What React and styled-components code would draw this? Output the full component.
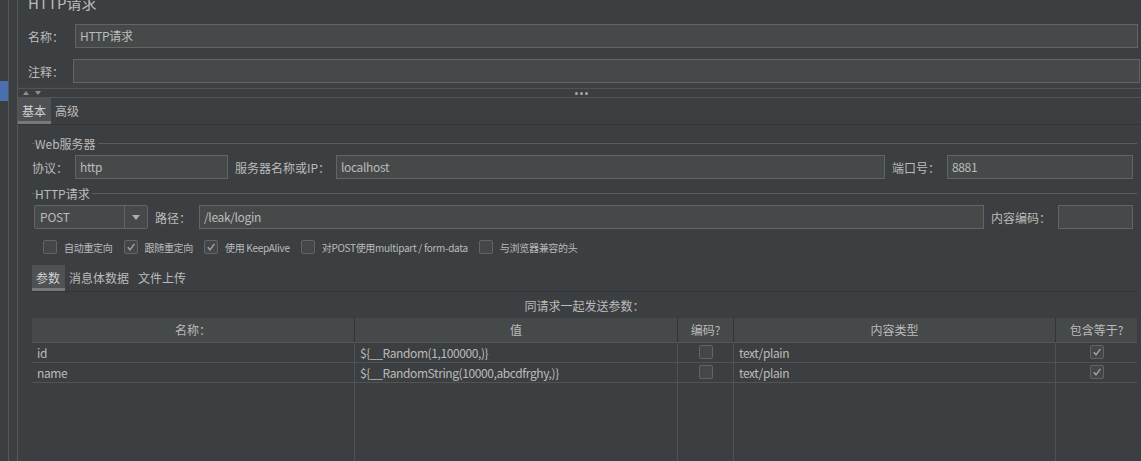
import React from "react";
import styled, { createGlobalStyle } from "styled-components";

const GlobalStyle = createGlobalStyle`
  html, body {
    margin: 0;
    padding: 0;
    background: #3c3f41;
  }
  body {
    font-family: "Noto Sans CJK SC", "Noto Sans", sans-serif;
    font-size: 12px;
    color: #bbbbbb;
  }
`;

const Root = styled.div`
  display: flex;
  height: 461px;
  overflow: hidden;
  background: #3c3f41;
`;

const Rail = styled.div`
  display: flex;
  flex: none;
`;

const RailCol = styled.div`
  width: 8px;
  border-right: 1px solid #555759;
`;

const Marker = styled.div`
  margin-top: 81px;
  height: 20px;
  background: #4b6eaf;
`;

const Main = styled.div`
  flex: 1;
  display: flex;
  flex-direction: column;
  min-width: 0;
`;

const Title = styled.div`
  margin-top: -7px;
  height: 20px;
  line-height: 20px;
  padding-left: 10px;
  font-size: 15px;
`;

const FormRow = styled.div`
  display: flex;
  align-items: center;
  margin-top: ${(p) => p.$top || 0}px;
  padding: 0 ${(p) => p.$right || 3}px 0 ${(p) => p.$left || 10}px;
`;

const Label = styled.div`
  flex: none;
  width: ${(p) => p.$w}px;
  margin-left: ${(p) => p.$ml || 0}px;
  white-space: nowrap;
`;

const Field = styled.div`
  box-sizing: border-box;
  height: 24px;
  line-height: 22px;
  padding: 0 4px;
  background: #45494a;
  border: 1px solid #646464;
  white-space: nowrap;
  overflow: hidden;
  letter-spacing: -0.35px;
  ${(p) => (p.$w ? `flex: none; width: ${p.$w}px;` : "flex: 1;")}
`;

const Band = styled.div`
  height: 5px;
  background: #3e4143;
`;

const Splitter = styled.div`
  box-sizing: border-box;
  height: 10px;
  border-top: 1px solid #515456;
  border-bottom: 1px solid #515456;
  display: grid;
  grid-template-columns: 1fr auto 1fr;
  align-items: center;
`;

const Arrows = styled.div`
  display: flex;
  gap: 6px;
  padding-left: 5px;
`;

const Tri = styled.div`
  width: 0;
  height: 0;
  border-left: 3px solid transparent;
  border-right: 3px solid transparent;
  ${(p) =>
    p.$down
      ? "border-top: 4px solid #8e9092;"
      : "border-bottom: 4px solid #8e9092;"}
`;

const Dots = styled.div`
  display: flex;
  gap: 2px;
  padding-left: 4px;
`;

const Dot = styled.div`
  width: 3px;
  height: 3px;
  border-radius: 50%;
  background: #a8a8a8;
`;

const TabBar = styled.div`
  display: flex;
  height: 26px;
  border-bottom: 1px solid #323436;
`;

const Tab = styled.div`
  box-sizing: border-box;
  height: 26px;
  padding: 0 5px 0 4px;
  line-height: 25px;
  font-size: 12px;
  color: ${(p) => (p.$active ? "#d0d0d0" : "#bbbbbb")};
  background: ${(p) => (p.$active ? "#4e5254" : "transparent")};
  border-bottom: 3px solid ${(p) => (p.$active ? "#767a7c" : "transparent")};
`;

const Content = styled.div`
  flex: 1;
  display: flex;
  flex-direction: column;
  padding: 0 4px 0 14px;
  min-height: 0;
`;

const Legend = styled.div`
  display: flex;
  align-items: center;
  height: 16px;
  margin-top: ${(p) => p.$top}px;

  &::before {
    content: "";
    width: 3px;
    border-top: 1px solid #5a5d5f;
  }
  &::after {
    content: "";
    flex: 1;
    border-top: 1px solid #5a5d5f;
  }
`;

const LegendText = styled.span`
  padding: 0 2px 0 0;
`;

const GroupRow = styled.div`
  display: flex;
  align-items: center;
  margin-top: 4px;
  padding-right: 4px;
`;

const Select = styled.div`
  box-sizing: border-box;
  flex: none;
  display: flex;
  width: 114px;
  height: 24px;
  margin-left: 2px;
  background: #45494a;
  border: 1px solid #646464;
  border-radius: 2px;
`;

const SelectValue = styled.div`
  flex: 1;
  line-height: 22px;
  padding-left: 5px;
  letter-spacing: -0.2px;
`;

const SelectArrow = styled.div`
  width: 22px;
  border-left: 1px solid #646464;
  display: flex;
  align-items: center;
  justify-content: center;

  &::after {
    content: "";
    border-left: 4px solid transparent;
    border-right: 4px solid transparent;
    border-top: 5px solid #a9abad;
  }
`;

const OptionRow = styled.div`
  display: flex;
  align-items: center;
  height: 14px;
  margin-top: 11px;
  padding-left: 11px;
  gap: 11px;
`;

const Option = styled.label`
  display: flex;
  align-items: center;
  gap: 7px;
  font-size: 10px;
  letter-spacing: -0.3px;
  white-space: nowrap;
`;

const Box = styled.span`
  box-sizing: border-box;
  display: inline-flex;
  align-items: center;
  justify-content: center;
  width: 14px;
  height: 14px;
  border: 1px solid #626466;
  border-radius: 2px;
  background: #43474a;
`;

const SubTabs = styled(TabBar)`
  margin-top: 11px;
`;

const Caption = styled.div`
  height: 26px;
  line-height: 27px;
  text-align: center;
`;

const Table = styled.div`
  flex: 1;
  display: flex;
  flex-direction: column;
  min-height: 0;
`;

const Row = styled.div`
  display: grid;
  grid-template-columns: 322px 323px 56px 322px 1fr;
  flex: ${(p) => (p.$fill ? 1 : "none")};
`;

const HeadCell = styled.div`
  box-sizing: border-box;
  height: 25px;
  line-height: 24px;
  text-align: center;
  background: #45494a;
  border-bottom: 1px solid #55585a;
  border-left: ${(p) => (p.$first ? "none" : "1px solid #323436")};
`;

const Cell = styled.div`
  box-sizing: border-box;
  height: ${(p) => (p.$fill ? "auto" : "20px")};
  line-height: 19px;
  padding-left: 5px;
  letter-spacing: -0.4px;
  border-bottom: ${(p) => (p.$fill ? "none" : "1px solid #505355")};
  border-left: ${(p) => (p.$first ? "none" : "1px solid #505355")};
  display: ${(p) => (p.$center ? "flex" : "block")};
  justify-content: center;
  align-items: center;
  ${(p) => p.$center && "padding-left: 0; padding-bottom: 1px;"}
  white-space: nowrap;
`;

function Check({ checked }) {
  return (
    <Box>
      {checked && (
        <svg width="10" height="10" viewBox="0 0 10 10">
          <polyline
            points="1.8,5.2 4,7.8 8.4,1.8"
            fill="none"
            stroke="#a2a4a6"
            strokeWidth="1.4"
          />
        </svg>
      )}
    </Box>
  );
}

const options = [
  ["自动重定向", false],
  ["跟随重定向", true],
  ["使用 KeepAlive", true],
  ["对POST使用multipart / form-data", false],
  ["与浏览器兼容的头", false],
];

const params = [
  ["id", "${__Random(1,100000,)}", "text/plain"],
  ["name", "${__RandomString(10000,abcdfrghy,)}", "text/plain"],
];

export default function App() {
  return (
    <>
      <GlobalStyle />
      <Root>
        <Rail>
          <RailCol>
            <Marker />
          </RailCol>
          <RailCol />
        </Rail>
        <Main>
          <Title>HTTP请求</Title>
          <FormRow $top={11}>
            <Label $w={47}>名称：</Label>
            <Field>HTTP请求</Field>
          </FormRow>
          <FormRow $top={11} $right={1}>
            <Label $w={45}>注释：</Label>
            <Field />
          </FormRow>
          <Band />
          <Splitter>
            <Arrows>
              <Tri />
              <Tri $down />
            </Arrows>
            <Dots>
              <Dot />
              <Dot />
              <Dot />
            </Dots>
            <div />
          </Splitter>
          <TabBar>
            <Tab $active>基本</Tab>
            <Tab>高级</Tab>
          </TabBar>
          <Content>
            <Legend $top={10}>
              <LegendText>Web服务器</LegendText>
            </Legend>
            <GroupRow>
              <Label $w={43}>协议：</Label>
              <Field $w={153}>http</Field>
              <Label $w={101} $ml={7}>
                服务器名称或IP：
              </Label>
              <Field>localhost</Field>
              <Label $w={55} $ml={7}>
                端口号：
              </Label>
              <Field $w={186}>8881</Field>
            </GroupRow>
            <Legend $top={6}>
              <LegendText>HTTP请求</LegendText>
            </Legend>
            <GroupRow>
              <Select>
                <SelectValue>POST</SelectValue>
                <SelectArrow />
              </Select>
              <Label $w={44} $ml={7}>
                路径：
              </Label>
              <Field>/leak/login</Field>
              <Label $w={67} $ml={7}>
                内容编码：
              </Label>
              <Field $w={75} />
            </GroupRow>
            <OptionRow>
              {options.map(([text, checked]) => (
                <Option key={text}>
                  <Check checked={checked} />
                  {text}
                </Option>
              ))}
            </OptionRow>
            <SubTabs>
              <Tab $active>参数</Tab>
              <Tab>消息体数据</Tab>
              <Tab>文件上传</Tab>
            </SubTabs>
            <Caption>同请求一起发送参数：</Caption>
            <Table>
              <Row>
                <HeadCell $first>名称：</HeadCell>
                <HeadCell>值</HeadCell>
                <HeadCell>编码?</HeadCell>
                <HeadCell>内容类型</HeadCell>
                <HeadCell>包含等于?</HeadCell>
              </Row>
              {params.map(([name, value, type]) => (
                <Row key={name}>
                  <Cell $first>{name}</Cell>
                  <Cell>{value}</Cell>
                  <Cell $center>
                    <Check />
                  </Cell>
                  <Cell>{type}</Cell>
                  <Cell $center>
                    <Check checked />
                  </Cell>
                </Row>
              ))}
              <Row $fill>
                <Cell $first $fill />
                <Cell $fill />
                <Cell $fill />
                <Cell $fill />
                <Cell $fill />
              </Row>
            </Table>
          </Content>
        </Main>
      </Root>
    </>
  );
}
